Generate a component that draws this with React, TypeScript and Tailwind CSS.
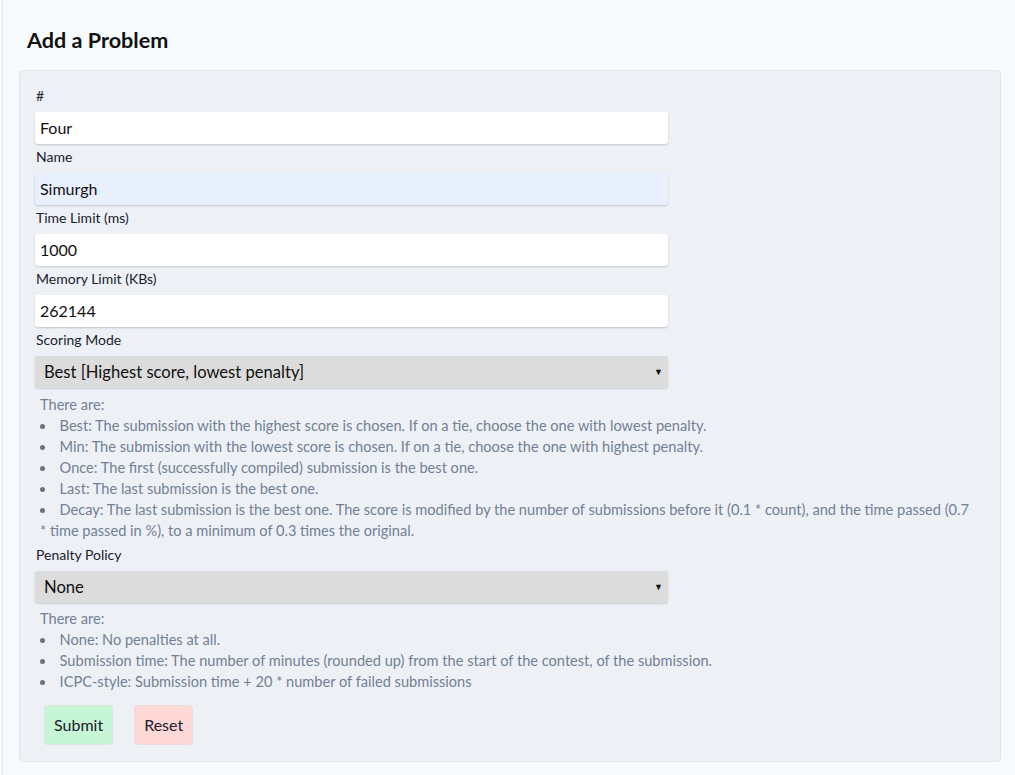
import React from "react";

const scoring = [
  "Best: The submission with the highest score is chosen. If on a tie, choose the one with lowest penalty.",
  "Min: The submission with the lowest score is chosen. If on a tie, choose the one with highest penalty.",
  "Once: The first (successfully compiled) submission is the best one.",
  "Last: The last submission is the best one.",
  "Decay: The last submission is the best one. The score is modified by the number of submissions before it (0.1 * count), and the time passed (0.7 * time passed in %), to a minimum of 0.3 times the original.",
];

const penalties = [
  "None: No penalties at all.",
  "Submission time: The number of minutes (rounded up) from the start of the contest, of the submission.",
  "ICPC-style: Submission time + 20 * number of failed submissions",
];

const Label = ({ children }: { children: React.ReactNode }) => (
  <div className="h-[20px] leading-[20px] text-[14px] text-[#1a202c] mb-[6px] pl-[1px]">{children}</div>
);

const Field = ({ label, value, blue }: { label: string; value: string; blue?: boolean }) => (
  <div className="mb-[3px]">
    <Label>{label}</Label>
    <div
      className={`w-[633px] h-[32px] rounded-[3px] shadow-[0_1px_2px_rgba(0,0,0,0.18)] px-[5px] flex items-center text-[16px] text-[#111] ${
        blue ? "bg-[#e8f0fe]" : "bg-white"
      }`}
    >
      {value}
    </div>
  </div>
);

const Select = ({ value }: { value: string }) => (
  <div className="w-[633px] h-[32px] rounded-[3px] bg-[#dcdcdc] shadow-[0_1px_2px_rgba(0,0,0,0.15)] pl-[9px] pr-[5px] flex items-center justify-between text-[16.6px] text-[#111]">
    <span>{value}</span>
    <span className="text-[9px]">▼</span>
  </div>
);

const Help = ({ items }: { items: string[] }) => (
  <div className="pl-[5px] pr-[10px] text-[14.6px] leading-[21px] text-[#718096]">
    <div>There are:</div>
    <ul className="list-disc list-inside">
      {items.map((t) => (
        <li key={t} className="[&::marker]:text-[#6b7280]">
          <span className="-ml-[1px]">{t}</span>
        </li>
      ))}
    </ul>
  </div>
);

export default function App() {
  return (
    <div className="min-h-[775px] bg-[#f7fafc] pl-[2px] font-['Lato','Noto_Sans',sans-serif]">
      <div className="min-h-[775px] border-l border-[#e2e8f0] pl-[16px] pr-[14px] pt-[26px]">
        <h1 className="text-[21.6px] leading-[28px] font-bold text-[#111] pl-[8px] mb-[16px]">Add a Problem</h1>
        <div className="bg-[#edf1f5] border border-[#dfe5ec] rounded-[4px] px-[15px] pt-[15px] pb-[16px]">
          <Field label="#" value="Four" />
          <Field label="Name" value="Simurgh" blue />
          <Field label="Time Limit (ms)" value="1000" />
          <Field label="Memory Limit (KBs)" value="262144" />
          <Label>Scoring Mode</Label>
          <Select value="Best [Highest score, lowest penalty]" />
          <div className="mt-[6px] mb-[4px]">
            <Help items={scoring} />
          </div>
          <Label>Penalty Policy</Label>
          <Select value="None" />
          <div className="mt-[5px]">
            <Help items={penalties} />
          </div>
          <div className="flex gap-[21px] ml-[9px] mt-[13px]">
            <button className="h-[40px] px-[9px] rounded-[3px] border border-[#dbe8e0] bg-[#c6f6d5] text-[16px] text-[#1a202c]">
              Submit
            </button>
            <button className="h-[40px] px-[9px] rounded-[3px] border border-[#ecdcdc] bg-[#fed7d7] text-[16px] text-[#1a202c]">
              Reset
            </button>
          </div>
        </div>
      </div>
    </div>
  );
}
